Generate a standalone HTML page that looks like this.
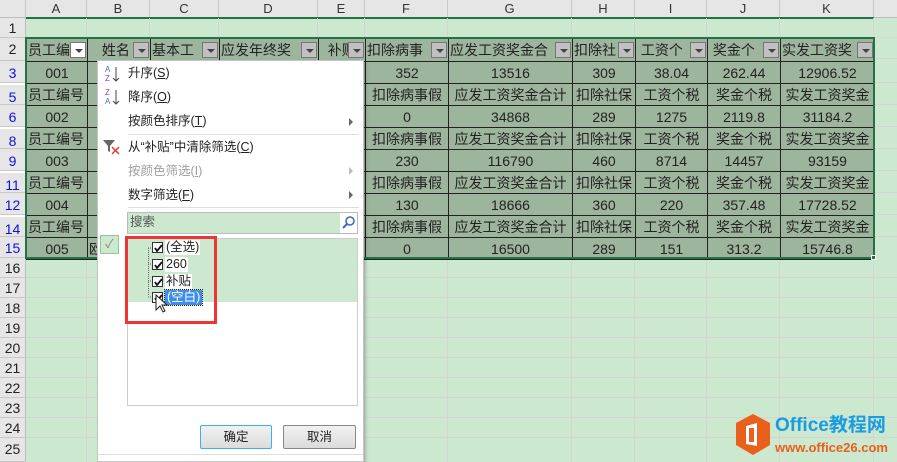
<!DOCTYPE html>
<html><head><meta charset="utf-8"><style>
*{margin:0;padding:0;box-sizing:border-box}
body{width:897px;height:462px;overflow:hidden;background:#cce8cf;font-family:"Liberation Sans","Noto Sans CJK SC",sans-serif;position:relative}
.abs{position:absolute}
.colh{position:absolute;top:0;height:18px;background:#e6e6e6;border-right:1px solid #c8c8c8;border-bottom:1px solid #bdbdbd;font-size:13px;color:#333;text-align:center;line-height:18px}
.rowh{position:absolute;left:0;width:26px;background:#e6e6e6;border-bottom:1px solid #c8c8c8;border-right:1px solid #bdbdbd;font-size:14px;text-align:center;color:#222}
.blue{color:#1010e0}
table{position:absolute;left:26px;top:38px;border-collapse:collapse;table-layout:fixed;font-size:14px;font-family:"Liberation Sans","Noto Sans CJK SC",sans-serif}
td{height:22px;border:1px solid #222;background:#9db49d;text-align:center;white-space:nowrap;overflow:hidden;color:#222;padding:0 1px;position:relative;line-height:20px}
td.l{text-align:left}
.dd{position:absolute;right:1px;top:3px;width:16px;height:16px;background:#c0c0c0;border:1px solid #777}
.dd:after{content:"";position:absolute;left:4px;top:6px;border-left:4px solid transparent;border-right:4px solid transparent;border-top:4px solid #444}
.menu{position:absolute;left:97px;top:60px;width:267px;height:402px;background:#fff;border:1px solid #c6c6c6;box-shadow:2px 2px 3px rgba(0,0,0,.2);font-size:12.5px;color:#222;line-height:16px}
.mi{position:absolute;left:30px}
.gray{color:#a0a0a0}
.arr{position:absolute;right:10px;width:0;height:0;border-top:4px solid transparent;border-bottom:4px solid transparent;border-left:4px solid #666}
.sep{position:absolute;left:30px;right:4px;height:1px;background:#ddd}
.cb{position:absolute;width:11px;height:11px;border:1px solid #333;background:#fff}
.li{position:absolute;left:37px;background:#fff;padding:0 1px;line-height:15px}
.btn{position:absolute;height:24px;border:1px solid #888;border-radius:2px;background:linear-gradient(#f2f2f2,#dcdcdc);font-size:12.5px;text-align:center;line-height:22px}
</style></head><body>
<div class="colh" style="left:0;width:26px;background:#e6e6e6"></div>
<div class="colh" style="left:26px;width:61px">A</div>
<div class="colh" style="left:87px;width:63px">B</div>
<div class="colh" style="left:150px;width:69px">C</div>
<div class="colh" style="left:219px;width:99px">D</div>
<div class="colh" style="left:318px;width:47px">E</div>
<div class="colh" style="left:365px;width:83px">F</div>
<div class="colh" style="left:448px;width:124px">G</div>
<div class="colh" style="left:572px;width:63px">H</div>
<div class="colh" style="left:635px;width:72px">I</div>
<div class="colh" style="left:707px;width:73px">J</div>
<div class="colh" style="left:780px;width:94px">K</div>
<div class="colh" style="left:874px;width:23px;border-right:none"></div>
<div class="abs" style="left:26px;top:17px;width:848px;height:2px;background:#217346"></div>
<div class="abs" style="left:26px;top:18px;width:871px;height:20px;border-bottom:1px solid #d6d6d6"></div>
<div class="rowh" style="top:18px;height:20px;line-height:20px">1</div>
<div class="rowh" style="top:38px;height:23px;line-height:23px">2</div>
<div class="rowh blue" style="top:61px;height:22px;line-height:24px">3</div>
<div class="rowh blue" style="top:83px;height:22px;line-height:24px;border-top:2px solid #fff">5</div>
<div class="rowh blue" style="top:105px;height:22px;line-height:24px">6</div>
<div class="rowh blue" style="top:127px;height:22px;line-height:24px;border-top:2px solid #fff">8</div>
<div class="rowh blue" style="top:149px;height:22px;line-height:24px">9</div>
<div class="rowh blue" style="top:171px;height:22px;line-height:24px;border-top:2px solid #fff">11</div>
<div class="rowh blue" style="top:193px;height:22px;line-height:24px">12</div>
<div class="rowh blue" style="top:215px;height:22px;line-height:24px;border-top:2px solid #fff">14</div>
<div class="rowh blue" style="top:237px;height:21px;line-height:23px">15</div>
<div class="rowh" style="top:258px;height:20px;line-height:20px">16</div>
<div class="rowh" style="top:278px;height:20px;line-height:20px">17</div>
<div class="rowh" style="top:298px;height:20px;line-height:20px">18</div>
<div class="rowh" style="top:318px;height:20px;line-height:20px">19</div>
<div class="rowh" style="top:338px;height:20px;line-height:20px">20</div>
<div class="rowh" style="top:358px;height:20px;line-height:20px">21</div>
<div class="rowh" style="top:378px;height:20px;line-height:20px">22</div>
<div class="rowh" style="top:398px;height:20px;line-height:20px">23</div>
<div class="rowh" style="top:418px;height:20px;line-height:20px">24</div>
<div class="rowh" style="top:438px;height:24px;line-height:22px">25</div>
<svg class="abs" style="left:26px;top:258px" width="871" height="204">
<g stroke="#d4d4d4" stroke-width="1">
<line x1="0" y1="19.5" x2="871" y2="19.5"/><line x1="0" y1="39.5" x2="871" y2="39.5"/><line x1="0" y1="59.5" x2="871" y2="59.5"/><line x1="0" y1="79.5" x2="871" y2="79.5"/><line x1="0" y1="99.5" x2="871" y2="99.5"/><line x1="0" y1="119.5" x2="871" y2="119.5"/><line x1="0" y1="139.5" x2="871" y2="139.5"/><line x1="0" y1="159.5" x2="871" y2="159.5"/><line x1="0" y1="179.5" x2="871" y2="179.5"/>
<line x1="60.5" y1="0" x2="60.5" y2="204"/><line x1="338.5" y1="0" x2="338.5" y2="204"/><line x1="421.5" y1="0" x2="421.5" y2="204"/><line x1="545.5" y1="0" x2="545.5" y2="204"/><line x1="608.5" y1="0" x2="608.5" y2="204"/><line x1="680.5" y1="0" x2="680.5" y2="204"/><line x1="753.5" y1="0" x2="753.5" y2="204"/><line x1="847.5" y1="0" x2="847.5" y2="204"/>
</g></svg>
<svg class="abs" style="left:26px;top:18px" width="871" height="240"><g stroke="#d4d4d4"><line x1="60.5" y1="0" x2="60.5" y2="20"/><line x1="123.5" y1="0" x2="123.5" y2="20"/><line x1="192.5" y1="0" x2="192.5" y2="20"/><line x1="291.5" y1="0" x2="291.5" y2="20"/><line x1="338.5" y1="0" x2="338.5" y2="20"/><line x1="421.5" y1="0" x2="421.5" y2="20"/><line x1="545.5" y1="0" x2="545.5" y2="20"/><line x1="608.5" y1="0" x2="608.5" y2="20"/><line x1="680.5" y1="0" x2="680.5" y2="20"/><line x1="753.5" y1="0" x2="753.5" y2="20"/><line x1="847.5" y1="0" x2="847.5" y2="20"/>
<line x1="848" y1="40.5" x2="871" y2="40.5"/><line x1="848" y1="64.5" x2="871" y2="64.5"/><line x1="848" y1="86.5" x2="871" y2="86.5"/><line x1="848" y1="108.5" x2="871" y2="108.5"/><line x1="848" y1="130.5" x2="871" y2="130.5"/><line x1="848" y1="152.5" x2="871" y2="152.5"/><line x1="848" y1="174.5" x2="871" y2="174.5"/><line x1="848" y1="196.5" x2="871" y2="196.5"/><line x1="848" y1="218.5" x2="871" y2="218.5"/></g></svg>
<table>
<colgroup><col style="width:61px"><col style="width:63px"><col style="width:69px"><col style="width:99px"><col style="width:47px"><col style="width:83px"><col style="width:124px"><col style="width:63px"><col style="width:72px"><col style="width:73px"><col style="width:94px"></colgroup>
<tr><td class="l" style="height:23px">员工编<span class="dd" style="background:#fff"></span></td><td style="padding-left:10px" class="l">&nbsp;姓名<span class="dd"></span></td><td class="l">基本工<span class="dd"></span></td><td class="l">应发年终奖<span class="dd"></span></td><td class="l">&nbsp;&nbsp;补贴<span class="dd"></span></td><td class="l">扣除病事<span class="dd"></span></td><td class="l">应发工资奖金合<span class="dd"></span></td><td class="l">扣除社<span class="dd"></span></td><td class="l">&nbsp;工资个<span class="dd"></span></td><td class="l">&nbsp;奖金个<span class="dd"></span></td><td class="l">实发工资奖<span class="dd"></span></td></tr>
<tr><td>001</td><td></td><td></td><td></td><td></td><td>352</td><td>13516</td><td>309</td><td>38.04</td><td>262.44</td><td>12906.52</td></tr>
<tr><td class="l">员工编号</td><td></td><td></td><td></td><td></td><td>扣除病事假</td><td>应发工资奖金合计</td><td>扣除社保</td><td>工资个税</td><td>奖金个税</td><td>实发工资奖金</td></tr>
<tr><td>002</td><td></td><td></td><td></td><td></td><td>0</td><td>34868</td><td>289</td><td>1275</td><td>2119.8</td><td>31184.2</td></tr>
<tr><td class="l">员工编号</td><td></td><td></td><td></td><td></td><td>扣除病事假</td><td>应发工资奖金合计</td><td>扣除社保</td><td>工资个税</td><td>奖金个税</td><td>实发工资奖金</td></tr>
<tr><td>003</td><td></td><td></td><td></td><td></td><td>230</td><td>116790</td><td>460</td><td>8714</td><td>14457</td><td>93159</td></tr>
<tr><td class="l">员工编号</td><td></td><td></td><td></td><td></td><td>扣除病事假</td><td>应发工资奖金合计</td><td>扣除社保</td><td>工资个税</td><td>奖金个税</td><td>实发工资奖金</td></tr>
<tr><td>004</td><td></td><td></td><td></td><td></td><td>130</td><td>18666</td><td>360</td><td>220</td><td>357.48</td><td>17728.52</td></tr>
<tr><td class="l">员工编号</td><td></td><td></td><td></td><td></td><td>扣除病事假</td><td>应发工资奖金合计</td><td>扣除社保</td><td>工资个税</td><td>奖金个税</td><td>实发工资奖金</td></tr>
<tr><td style="height:21px">005</td><td class="l">欧</td><td></td><td></td><td></td><td>0</td><td>16500</td><td>289</td><td>151</td><td>313.2</td><td>15746.8</td></tr>
</table>
<div class="abs" style="left:25px;top:37px;width:850px;height:222px;border:2px solid #217346"></div>
<div class="abs" style="left:871px;top:255px;width:5px;height:5px;background:#217346;border:1px solid #fff"></div>
<div class="menu">
<svg class="abs" style="left:6px;top:3px" width="22" height="42"><text x="1" y="8" font-size="8" fill="#3a6fbf" font-family="Liberation Sans">A</text><text x="1" y="17" font-size="8" fill="#8a44b0" font-family="Liberation Sans">Z</text><path d="M12 3v14M9 14l3 3 3-3" stroke="#444" fill="none"/>
<text x="1" y="31" font-size="8" fill="#8a44b0" font-family="Liberation Sans">Z</text><text x="1" y="40" font-size="8" fill="#3a6fbf" font-family="Liberation Sans">A</text><path d="M12 26v14M9 37l3 3 3-3" stroke="#444" fill="none"/></svg>
<div class="mi" style="top:4px">升序(<u>S</u>)</div>
<div class="mi" style="top:28px">降序(<u>O</u>)</div>
<div class="mi" style="top:52px">按颜色排序(<u>T</u>)</div><div class="arr" style="top:57px"></div>
<div class="sep" style="top:73px"></div>
<svg class="abs" style="left:4px;top:77px" width="20" height="18"><path d="M1 2h12l-5 6v6l-2-1V8z" fill="#666"/><path d="M10 9l7 7M17 9l-7 7" stroke="#e03c2c" stroke-width="1.5"/></svg>
<div class="mi" style="top:78px">从“补贴”中清除筛选(<u>C</u>)</div>
<div class="mi gray" style="top:102px">按颜色筛选(<u>I</u>)</div><div class="arr" style="top:106px;border-left-color:#bbb"></div>
<div class="mi" style="top:126px">数字筛选(<u>F</u>)</div><div class="arr" style="top:130px"></div>
<div class="sep" style="top:146px"></div>
<div class="abs" style="left:29px;top:151px;width:231px;height:22px;border:1px solid #bbb;background:#cce8cf;color:#555;line-height:19px;padding-left:2px">搜索
<div class="abs" style="right:0;top:0;width:17px;height:20px;background:#fff"><svg width="17" height="20"><circle cx="10" cy="8" r="4" stroke="#3b6fb5" stroke-width="1.6" fill="none"/><path d="M7 11l-4 4" stroke="#3b6fb5" stroke-width="2"/></svg></div></div>
<div class="abs" style="left:2px;top:174px;width:19px;height:19px;border:1px solid #8fc79a;background:#cce8cf;color:#888;text-align:center;line-height:17px;font-size:12px">✓</div>
<div class="abs" style="left:29px;top:177px;width:231px;height:168px;border:1px solid #ccc;background:#fff">
<div class="abs" style="left:0;top:0;width:229px;height:63px;background:#cce8cf"></div>
<svg class="abs" style="left:0;top:0" width="40" height="70"><path d="M20.5 9v47M20 9h5M20 25h5M20 42h5M20 58h5" stroke="#666" stroke-dasharray="1 1" fill="none"/></svg>
<div class="cb" style="left:24px;top:3px"></div><div class="li" style="top:1px">(全选)</div>
<div class="cb" style="left:24px;top:20px"></div><div class="li" style="top:18px">260</div>
<div class="cb" style="left:24px;top:37px"></div><div class="li" style="top:35px">补贴</div>
<div class="cb" style="left:24px;top:53px"></div><div class="li" style="top:51px;background:#3c8ee8;color:#fff;padding:0 2px;outline:1px dotted #222">(空白)</div>
<svg class="abs" style="left:24px;top:3px" width="14" height="64"><g stroke="#111" stroke-width="1.8" fill="none"><path d="M3 6l2 3 5-6"/><path d="M3 23l2 3 5-6"/><path d="M3 40l2 3 5-6"/><path d="M3 56l2 3 5-6"/></g></svg>
<svg class="abs" style="left:27px;top:55px" width="16" height="22"><path d="M1 1v15l4-4 3 6 2-1-3-6h5z" fill="#fff" stroke="#222"/></svg>
</div>
<div class="abs" style="left:27px;top:175px;width:92px;height:88px;border:3px solid #ee3535"></div>
<div class="btn" style="left:102px;top:364px;width:72px;border-color:#3ab2e6">确定</div>
<div class="btn" style="left:185px;top:364px;width:73px">取消</div>
<div class="abs" style="left:0;top:393px;width:265px;height:1px;background:#ddd"></div>
</div>
<svg class="abs" style="left:733px;top:413px" width="40" height="44"><path d="M20 1l17 9v22l-17 10L3 32V10z" fill="#e8601c"/><path d="M13 13l11-3v23l-11-2z" fill="#fff"/><rect x="16" y="15" width="5" height="14" fill="#e8601c"/></svg>
<div class="abs" style="left:775px;top:414px;font-size:19px;font-weight:bold;color:#1b9be0;line-height:24px;white-space:nowrap">Office教程网</div>
<div class="abs" style="left:775px;top:440px;font-size:13px;font-weight:bold;color:#e8601c;line-height:16px;white-space:nowrap">www.office26.com</div>
</body></html>
